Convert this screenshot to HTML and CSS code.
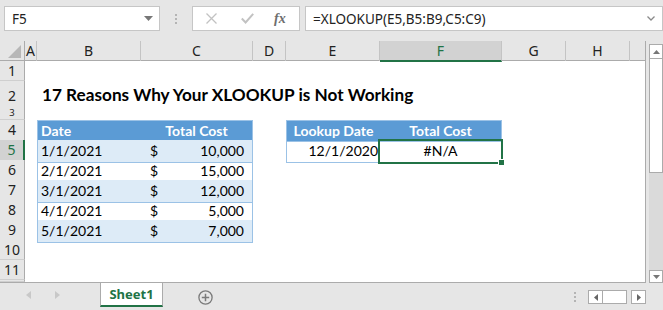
FILE: index.html
```html
<!DOCTYPE html>
<html lang="en">
<head>
  <meta charset="UTF-8">
  <title>XLOOKUP Not Working - Sheet1</title>
  <link rel="stylesheet" href="styles.css">
</head>
<body>
  <div class="app">
    <div class="toolbar">
      <div class="namebox">
        <span>F5</span>
        <svg class="caret" width="9" height="5" viewBox="0 0 9 5"><path d="M0 0h9L4.5 5z" fill="#777"/></svg>
      </div>
      <div class="grip"><i></i><i></i><i></i></div>
      <div class="fxbox">
        <svg width="11" height="11" viewBox="0 0 11 11"><path d="M0.5 0.5l10 10M10.5 0.5l-10 10" stroke="#c2c2c2" stroke-width="1.3" fill="none"/></svg>
        <svg width="13" height="11" viewBox="0 0 13 11"><path d="M0.8 5.5l3.8 4L12.2 0.8" stroke="#c2c2c2" stroke-width="2" fill="none"/></svg>
        <span class="fx">fx</span>
      </div>
      <div class="formula">
        <span>=XLOOKUP(E5,B5:B9,C5:C9)</span>
        <svg class="chev" width="8" height="5" viewBox="0 0 8 5"><path d="M0.5 0.5l3.5 3.5 3.5-3.5" stroke="#8a8a8a" stroke-width="1.3" fill="none"/></svg>
      </div>
    </div>

    <div class="main">
      <div class="sheet">
        <div class="row head">
          <div class="corner"><svg width="13" height="13" viewBox="0 0 13 13"><path d="M13 0v13H0z" fill="#b7b7b7"/></svg></div>
          <div class="ch">A</div>
          <div class="ch">B</div>
          <div class="ch">C</div>
          <div class="ch">D</div>
          <div class="ch">E</div>
          <div class="ch active">F</div>
          <div class="ch">G</div>
          <div class="ch">H</div>
          <div class="ch last"></div>
        </div>

        <div class="row"><div class="rh">1</div></div>

        <div class="row tall">
          <div class="rh">2</div>
          <div></div>
          <div class="title">17 Reasons Why Your XLOOKUP is Not Working</div>
        </div>

        <div class="row short"><div class="rh">3</div></div>

        <div class="row">
          <div class="rh">4</div>
          <div></div>
          <div class="c th first">Date</div>
          <div class="c th last center">Total Cost</div>
          <div></div>
          <div class="c th first center">Lookup Date</div>
          <div class="c th last center">Total Cost</div>
        </div>

        <div class="row">
          <div class="rh active">5</div>
          <div></div>
          <div class="c td band first">1/1/2021</div>
          <div class="c td band last money"><span>$</span><span>10,000</span></div>
          <div></div>
          <div class="c td first right">12/1/2020</div>
          <div class="c td last center selected">#N/A<div class="sel"></div><div class="handle"></div></div>
        </div>

        <div class="row">
          <div class="rh">6</div>
          <div></div>
          <div class="c td first">2/1/2021</div>
          <div class="c td last money"><span>$</span><span>15,000</span></div>
        </div>

        <div class="row">
          <div class="rh">7</div>
          <div></div>
          <div class="c td band first">3/1/2021</div>
          <div class="c td band last money"><span>$</span><span>12,000</span></div>
        </div>

        <div class="row">
          <div class="rh">8</div>
          <div></div>
          <div class="c td first">4/1/2021</div>
          <div class="c td last money"><span>$</span><span>5,000</span></div>
        </div>

        <div class="row">
          <div class="rh">9</div>
          <div></div>
          <div class="c td band first">5/1/2021</div>
          <div class="c td band last money"><span>$</span><span>7,000</span></div>
        </div>

        <div class="row"><div class="rh">10</div></div>
        <div class="row"><div class="rh">11</div></div>
        <div class="row stub"><div class="rh"></div></div>
      </div>

      <div class="vscroll">
        <div class="sbtn"><svg width="7" height="4" viewBox="0 0 7 4"><path d="M0 4h7L3.5 0z" fill="#777"/></svg></div>
        <div class="thumb"></div>
        <div class="track"></div>
        <div class="sbtn down"><svg width="7" height="4" viewBox="0 0 7 4"><path d="M0 0h7L3.5 4z" fill="#777"/></svg></div>
      </div>
    </div>

    <div class="tabs">
      <div class="nav">
        <svg width="5" height="8" viewBox="0 0 5 8"><path d="M5 0v8L0 4z" fill="#c8c8c8"/></svg>
        <svg width="5" height="8" viewBox="0 0 5 8"><path d="M0 0v8l5-4z" fill="#c8c8c8"/></svg>
      </div>
      <div class="tab">Sheet1</div>
      <svg class="add" width="15" height="15" viewBox="0 0 15 15">
        <circle cx="7.5" cy="7.5" r="6.6" stroke="#7a7a7a" stroke-width="1.3" fill="none"/>
        <path d="M7.5 3.8v7.4M3.8 7.5h7.4" stroke="#7a7a7a" stroke-width="1.5"/>
      </svg>
      <div class="spacer"></div>
      <div class="grip small"><i></i><i></i><i></i></div>
      <div class="hscroll">
        <div class="hbtn"><svg width="4" height="7" viewBox="0 0 4 7"><path d="M4 0v7L0 3.5z" fill="#666"/></svg></div>
        <div class="hthumb"></div>
        <div class="hbtn"><svg width="4" height="7" viewBox="0 0 4 7"><path d="M0 0v7l4-3.5z" fill="#666"/></svg></div>
      </div>
    </div>
  </div>
</body>
</html>
```

FILE: styles.css
```css
body {
  margin: 0;
  background-color: #e6e6e6;
  overflow: hidden;
}

.app {
  width: 663px;
  height: 310px;
  background-color: #e6e6e6;
  font-family: 'Noto Sans', 'Open Sans', sans-serif;
  color: #222;
}

/* formula bar */
.toolbar {
  height: 41px;
  display: flex;
  align-items: flex-start;
  padding: 6px 0 0 4px;
  box-sizing: border-box;
}

.namebox {
  width: 156px;
  height: 25px;
  box-sizing: border-box;
  background-color: #fff;
  border: 1px solid #c6c6c6;
  display: flex;
  align-items: center;
  justify-content: space-between;
  padding: 0 6px 0 7px;
  font-size: 13.5px;
}

.grip {
  width: 32px;
  height: 25px;
  display: flex;
  flex-direction: column;
  align-items: center;
  justify-content: center;
  gap: 2px;
}

.grip i {
  display: block;
  width: 2px;
  height: 2px;
  background-color: #b4b4b4;
}

.fxbox {
  width: 108px;
  height: 25px;
  box-sizing: border-box;
  background-color: #fff;
  border: 1px solid #c6c6c6;
  display: flex;
  align-items: center;
  padding-left: 13px;
  gap: 24px;
}

.fx {
  font-family: 'Liberation Serif', serif;
  font-style: italic;
  font-weight: bold;
  font-size: 14px;
  color: #6e6e6e;
  margin-left: -4px;
}

.formula {
  flex: 1;
  height: 25px;
  margin-left: 5px;
  box-sizing: border-box;
  background-color: #fff;
  border: 1px solid #c6c6c6;
  display: flex;
  align-items: center;
  justify-content: space-between;
  padding: 0 7px 0 7px;
  font-size: 13.5px;
}

/* grid */
.main {
  display: flex;
  height: 242px;
}

.sheet {
  width: 646px;
  height: 242px;
  box-sizing: border-box;
  background-color: #fff;
  border-right: 1px solid #ababab;
  border-bottom: 1px solid #ababab;
  overflow: hidden;
}

.row {
  display: grid;
  grid-template-columns: 25px 12px 104px 112px 33px 94px 122px 64px 64px 15px;
  height: 20px;
}

.row.tall { height: 26px; }
.row.short { height: 13px; }
.row.stub { height: 2px; }

.row.head {
  background-color: #e6e6e6;
  border-bottom: 1px solid #ababab;
  box-sizing: border-box;
}

.corner {
  border-right: 1px solid #ababab;
  display: flex;
  align-items: flex-end;
  justify-content: flex-end;
  padding: 0 3px 3px 0;
}

.ch {
  border-right: 1px solid #c4c4c4;
  text-align: center;
  font-size: 14px;
  line-height: 19px;
}

.ch.last { border-right: none; }

.ch.active {
  background-color: #d2d2d2;
  color: #217346;
  border-bottom: 2px solid #217346;
  margin-bottom: -1px;
}

.rh {
  background-color: #e6e6e6;
  border-right: 1px solid #ababab;
  border-bottom: 1px solid #cfcfcf;
  box-sizing: border-box;
  text-align: center;
  font-size: 14px;
  line-height: 20px;
  overflow: hidden;
}

.short .rh {
  font-size: 9.5px;
  line-height: 12px;
}

.tall .rh { line-height: 30px; }

.rh.active {
  background-color: #d2d2d2;
  color: #217346;
  border-right: 2px solid #217346;
}

/* cells */
.c {
  font-family: Lato, 'Liberation Sans', sans-serif;
  font-size: 14px;
  line-height: 22px;
  padding: 0 3px;
  white-space: nowrap;
  box-sizing: border-box;
  color: #000;
}

.title {
  grid-column: 3 / span 6;
  font-family: Lato, 'Liberation Sans', sans-serif;
  font-weight: bold;
  font-size: 17.2px;
  line-height: 28px;
  padding-left: 5px;
  white-space: nowrap;
  color: #000;
}

.th {
  background-color: #5b9bd5;
  color: #fff;
  font-weight: bold;
  border-top: 1px solid #9bc2e6;
  border-bottom: 1px solid #9bc2e6;
  line-height: 20px;
}

.td {
  border-bottom: 1px solid #9bc2e6;
}

.first { border-left: 1px solid #9bc2e6; }
.last { border-right: 1px solid #9bc2e6; }

.band { background-color: #ddebf7; }

.center { text-align: center; }
.right { text-align: right; padding-right: 2px; }

.money {
  display: flex;
  justify-content: space-between;
  padding: 0 8px 0 9px;
}

.selected {
  position: relative;
}

.sel {
  position: absolute;
  left: -2px;
  top: -1px;
  right: -2px;
  bottom: -2px;
  border: 2px solid #217346;
}

.handle {
  position: absolute;
  right: -4px;
  bottom: -4px;
  width: 5px;
  height: 5px;
  background-color: #217346;
  border: 1px solid #fff;
}

/* vertical scrollbar */
.vscroll {
  margin: 3px 0 0 3px;
  width: 14px;
  height: 239px;
  display: flex;
  flex-direction: column;
}

.sbtn {
  height: 15px;
  box-sizing: border-box;
  background-color: #fff;
  border: 1px solid #ababab;
  display: flex;
  align-items: center;
  justify-content: center;
}

.sbtn.down { height: 13px; }

.thumb {
  height: 114px;
  box-sizing: border-box;
  background-color: #fff;
  border: 1px solid #ababab;
  border-top: none;
}

.track {
  flex: 1;
  background-color: #dadada;
}

/* sheet tabs */
.tabs {
  height: 27px;
  display: flex;
  align-items: flex-start;
}

.nav {
  width: 100px;
  height: 24px;
  display: flex;
  align-items: center;
  padding-left: 26px;
  box-sizing: border-box;
  gap: 24px;
}

.tab {
  width: 63px;
  height: 24px;
  box-sizing: border-box;
  background-color: #fff;
  border-left: 1px solid #ababab;
  border-right: 1px solid #ababab;
  border-bottom: 2px solid #217346;
  color: #217346;
  font-weight: bold;
  font-size: 13px;
  text-align: center;
  line-height: 22px;
}

.add {
  margin: 7px 0 0 35px;
}

.spacer { flex: 1; }

.grip.small {
  width: 6px;
  height: 27px;
  margin-right: 10px;
}

.hscroll {
  display: flex;
  margin: 7px 17px 0 0;
  height: 14px;
}

.hbtn {
  width: 15px;
  height: 14px;
  box-sizing: border-box;
  background-color: #fff;
  border: 1px solid #ababab;
  display: flex;
  align-items: center;
  justify-content: center;
}

.hthumb {
  width: 24px;
  height: 14px;
  box-sizing: border-box;
  background-color: #fff;
  border: 1px solid #ababab;
  border-left: none;
  margin-right: 4px;
}
```
